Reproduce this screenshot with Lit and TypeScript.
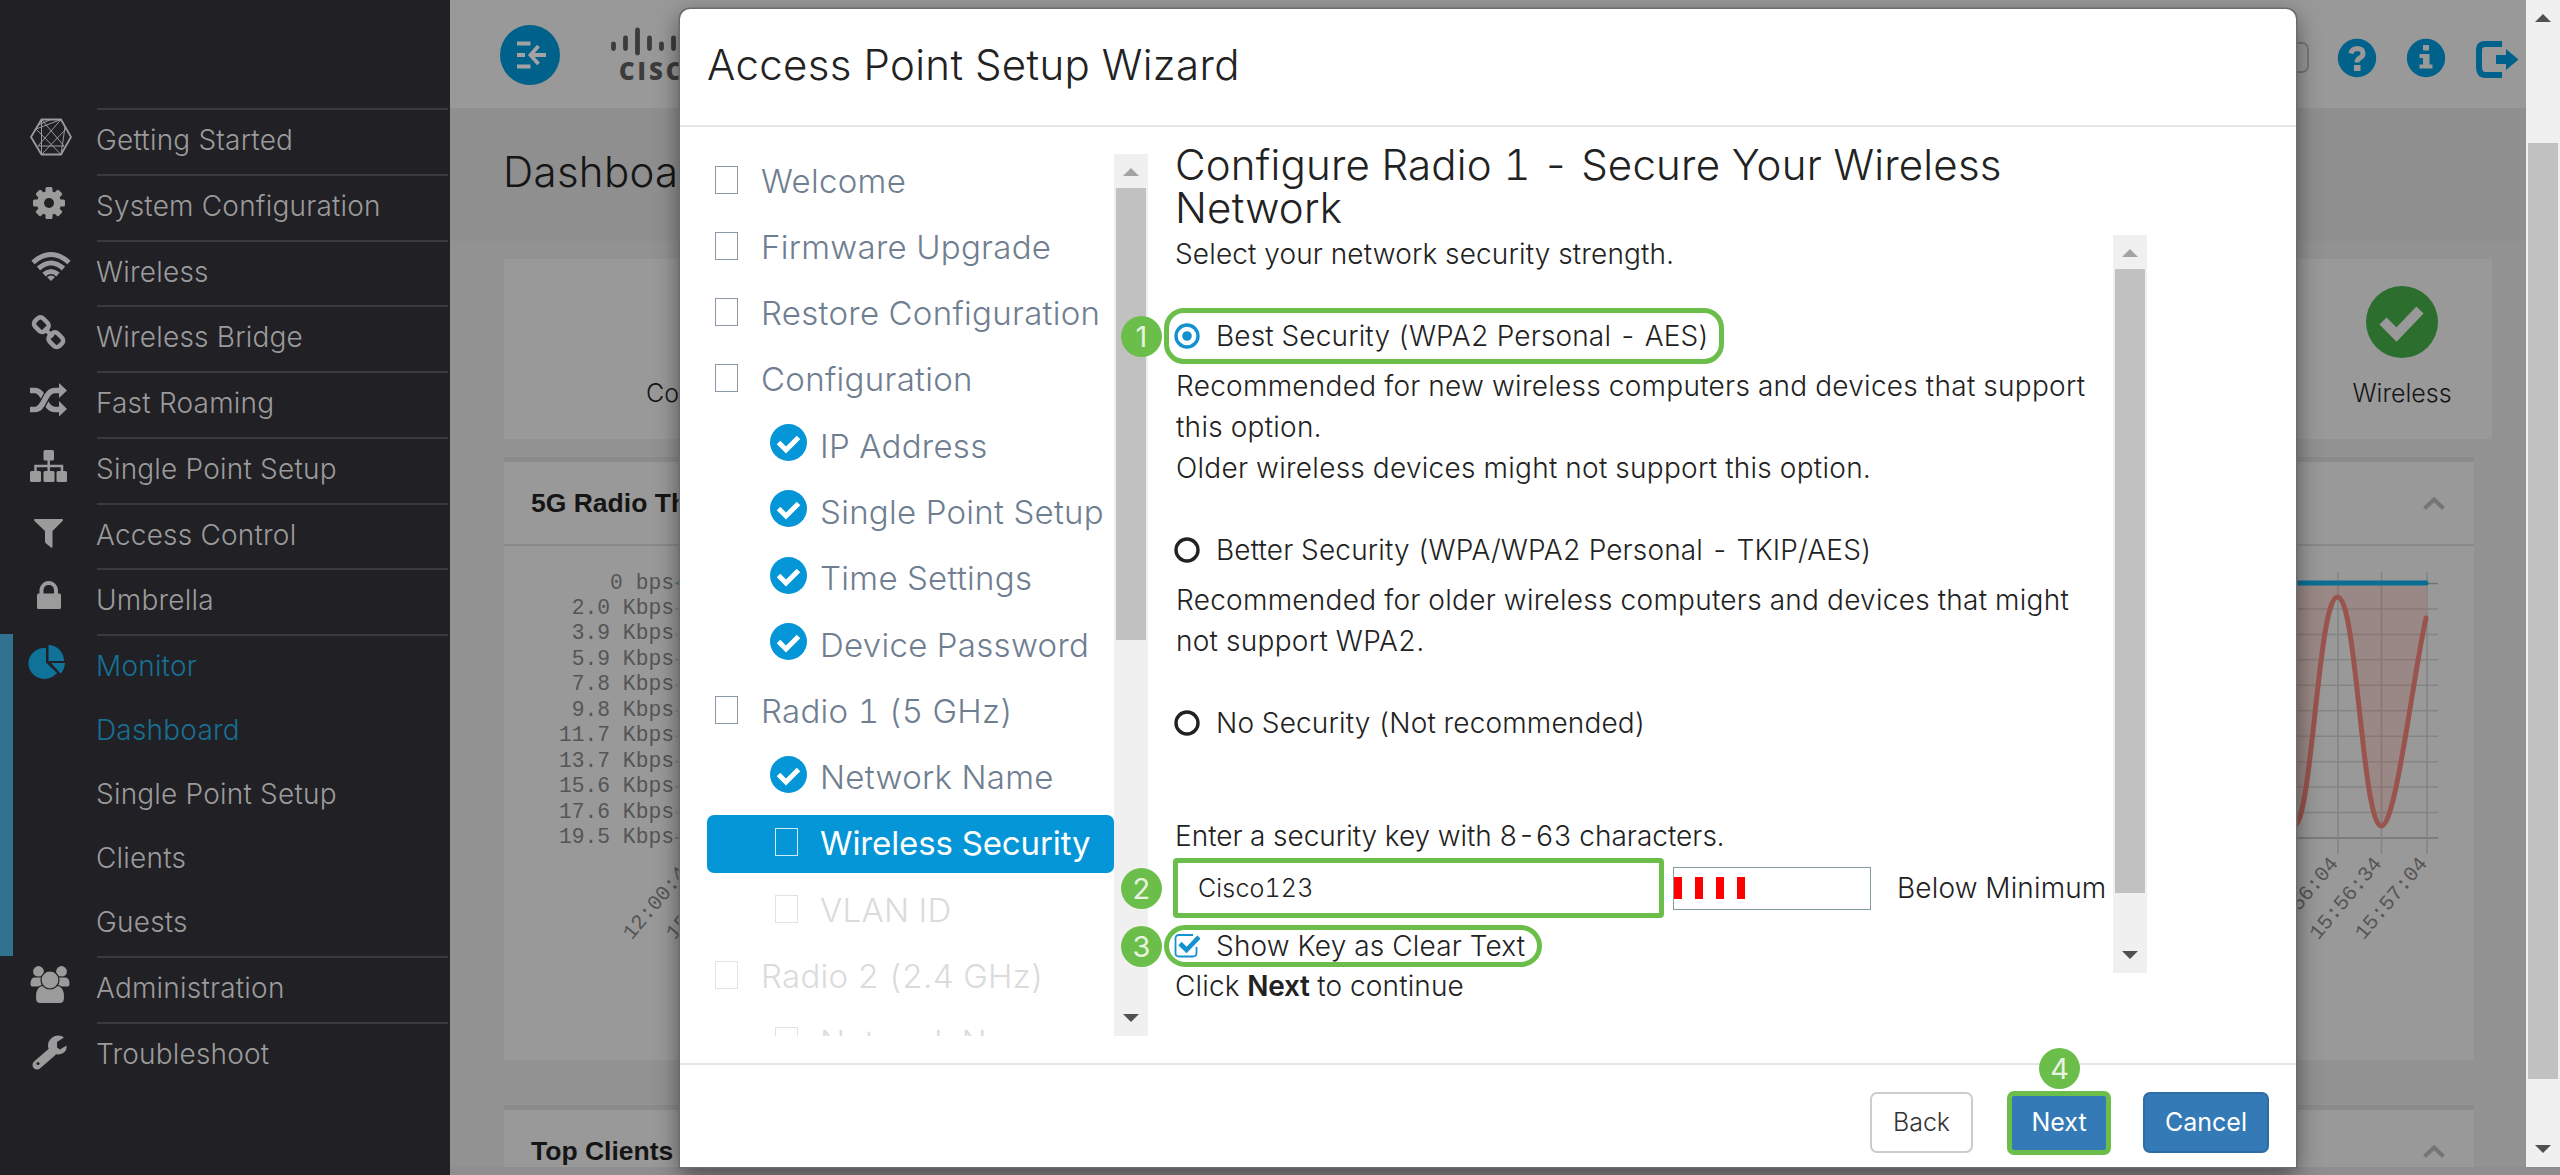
import { LitElement, html, css, svg, nothing } from "lit";
import { customElement, property } from "lit/decorators.js";
import { classMap } from "lit/directives/class-map.js";

const ICONS: Record<string, unknown> = {
  start: svg`
    <g fill="none" stroke="currentColor">
      <path stroke-width="1.8" d="M13.5 4.5H33L43 22 33 39.5H13.5L3 22Z"/>
      <path stroke-width="1" d="M13.5 4.5 36 31M33 4.5 10 31M13.5 4.5V39.5M33 39.5 8 14M13.5 39.5 38 14M10 31H36M8 14 33 4.5M10 10 23 4.5M33 39.5 37 12"/>
    </g>`,
  gear: svg`
    <g fill="currentColor">
      ${[0, 45, 90, 135].map((a) => svg`<rect x="17.5" y="6" width="7" height="32" rx="1.5" transform="rotate(${a} 21 22)"/>`)}
    </g>
    <circle cx="21" cy="22" r="8.5" fill="none" stroke="currentColor" stroke-width="7"/>
    <circle cx="21" cy="22" r="5" fill="#202025"/>`,
  wifi: svg`
    <g fill="none" stroke="currentColor" stroke-width="5">
      <path d="M5 15.5Q23 -0.5 41 15.5"/>
      <path d="M10.5 21.5Q23 10.5 35.5 21.5"/>
      <path d="M16 27.5Q23 21.5 30 27.5"/>
    </g>
    <path d="M19 30Q23 27 27 30L23 34Z" fill="currentColor"/>`,
  link: svg`
    <g fill="none" stroke="currentColor" stroke-width="4.5">
      <rect x="6.5" y="7" width="14" height="11.5" rx="4" transform="rotate(45 13.5 12.5)"/>
      <rect x="21" y="22" width="14" height="11.5" rx="4" transform="rotate(45 28 27.5)"/>
      <path d="M16 16 25 25" stroke-width="4"/>
    </g>`,
  random: svg`
    <g fill="none" stroke="currentColor" stroke-width="5.5">
      <path d="M2 12.5H7C17 12.5 16 31.5 27 31.5H32"/>
      <path d="M7 31.5C17 31.5 16 12.5 27 12.5" stroke="#202025" stroke-width="8"/>
      <path d="M2 31.5H7C17 31.5 16 12.5 27 12.5H32"/>
    </g>
    <path d="M31 5 39 12.5 31 20ZM31 23 39 31 31 38.5Z" fill="currentColor"/>`,
  sitemap: svg`
    <g fill="currentColor">
      <rect x="15.5" y="6" width="10.5" height="10.5" rx="1.5"/>
      <rect x="2" y="27" width="11" height="11" rx="1.5"/>
      <rect x="15.5" y="27" width="11" height="11" rx="1.5"/>
      <rect x="28.5" y="27" width="10.5" height="11" rx="1.5"/>
    </g>
    <path d="M7.5 28V22H34V28M20.7 15V28" fill="none" stroke="currentColor" stroke-width="2.5"/>`,
  filter: svg`<path d="M6.5 9H34.5Q35.5 10 34.5 11L24.5 21V37Q24 38 23 37.5L17.5 33 17 32V21L6.5 11Q5.5 10 6.5 9Z" fill="currentColor"/>`,
  lock: svg`
    <path d="M13.5 20V14.5A7.3 7.3 0 0 1 28 14.5V20" fill="none" stroke="currentColor" stroke-width="4"/>
    <rect x="9" y="18.5" width="24" height="15.5" rx="1.5" fill="currentColor"/>`,
  pie: svg`
    <g fill="currentColor">
      <path d="M18 7V21.5L29 32A16 15.5 0 1 1 18 7Z"/>
      <path d="M20.5 4A15.5 16 0 0 1 36 20H20.5Z"/>
      <path d="M23 22H37Q36.5 29 32.5 32.5Z"/>
    </g>`,
  users: svg`
    <g fill="currentColor" stroke="#202025" stroke-width="1.2">
      <circle cx="10.5" cy="8.5" r="6"/>
      <circle cx="33.5" cy="8.5" r="6"/>
      <path d="M2 22V19Q3 13 8 14H16V24H4Q2 24 2 22Z"/>
      <path d="M42 22V19Q41 13 36 14H28V24H40Q42 24 42 22Z"/>
      <path d="M7.5 36V31Q9 22.5 15 22.5H29Q35 22.5 36.5 31V36Q36 40.5 32 40.5H12Q8 40.5 7.5 36Z"/>
      <circle cx="22" cy="17" r="9"/>
    </g>`,
  wrench: svg`
    <path d="M24 23 9 36" stroke="currentColor" stroke-width="9" stroke-linecap="round"/>
    <path d="M36 8.5 29 13V18.5L32 20.5 38.5 16.5C39.5 22 35 25.5 30 25.5 24 25.5 20 21 20 16.5 20 11 25 6.5 30 6.5Q34 6.5 36 8.5Z" fill="currentColor"/>
    <circle cx="10" cy="34.5" r="1.5" fill="#202025"/>`,
};

const MENU = [
  { icon: "start", label: "Getting Started" },
  { icon: "gear", label: "System Configuration" },
  { icon: "wifi", label: "Wireless" },
  { icon: "link", label: "Wireless Bridge" },
  { icon: "random", label: "Fast Roaming" },
  { icon: "sitemap", label: "Single Point Setup" },
  { icon: "filter", label: "Access Control" },
  { icon: "lock", label: "Umbrella" },
  {
    icon: "pie",
    label: "Monitor",
    children: ["Dashboard", "Single Point Setup", "Clients", "Guests"],
  },
  { icon: "users", label: "Administration" },
  { icon: "wrench", label: "Troubleshoot" },
];

interface Step {
  label: string;
  sub?: boolean;
  done?: boolean;
  active?: boolean;
  off?: boolean;
}

const STEPS: Step[] = [
  { label: "Welcome" },
  { label: "Firmware Upgrade" },
  { label: "Restore Configuration" },
  { label: "Configuration" },
  { label: "IP Address", sub: true, done: true },
  { label: "Single Point Setup", sub: true, done: true },
  { label: "Time Settings", sub: true, done: true },
  { label: "Device Password", sub: true, done: true },
  { label: "Radio 1 (5 GHz)" },
  { label: "Network Name", sub: true, done: true },
  { label: "Wireless Security", sub: true, active: true },
  { label: "VLAN ID", sub: true, off: true },
  { label: "Radio 2 (2.4 GHz)", off: true },
  { label: "Network Name", sub: true, off: true },
];

const RATES = ["0 bps", "2.0 Kbps", "3.9 Kbps", "5.9 Kbps", "7.8 Kbps", "9.8 Kbps", "11.7 Kbps", "13.7 Kbps", "15.6 Kbps", "17.6 Kbps", "19.5 Kbps"];

const TIMES: [number, string][] = [
  [696, "12:00:44"],
  [739, "15:48:04"],
  [2339, "15:56:04"],
  [2382.5, "15:56:34"],
  [2428, "15:57:04"],
];

@customElement("side-menu")
export class SideMenu extends LitElement {
  static styles = css`
    :host {
      display: block;
      box-sizing: border-box;
      width: 450px;
      height: 1175px;
      padding-top: 108px;
      background: #202025;
      color: #9b9b9b;
      font: 350 28px Inter, sans-serif;
      letter-spacing: 0.2px;
    }
    .group {
      box-sizing: border-box;
      display: grid;
      grid-template-columns: 97px 351px;
      height: 65.75px;
    }
    .group.open {
      height: 322px;
      box-shadow: inset 13px 0 #30728f;
    }
    .open svg {
      color: #0f7299;
    }
    .open .row:nth-child(-n + 2) {
      color: #176f92;
    }
    svg {
      width: 44px;
      height: 44px;
      margin: 7px 0 0 28px;
    }
    .labels {
      border-top: 2px solid #3a3a3e;
    }
    .row {
      height: 64px;
      margin-left: -1px;
      line-height: 61px;
      white-space: nowrap;
    }`;

  render() {
    return MENU.map((item) => html`
      <div class=${classMap({ group: true, open: !!item.children })}>
        <svg viewBox="0 0 44 44">${ICONS[item.icon]}</svg>
        <div class="labels">
          <div class="row">${item.label}</div>
          ${item.children?.map((child) => html`<div class="row">${child}</div>`)}
        </div>
      </div>`);
  }
}

@customElement("scroll-bar")
export class ScrollBar extends LitElement {
  @property({ type: Number }) start = 34;
  @property({ type: Number }) size = 400;
  @property({ type: Boolean }) atTop = false;

  static styles = css`
    :host {
      display: flex;
      flex-direction: column;
      justify-content: space-between;
      align-items: center;
      width: 34px;
      background: #f0f0f0;
      position: relative;
    }
    .thumb {
      position: absolute;
      left: 2px;
      right: 2px;
      background: #c1c1c1;
    }
    svg {
      width: 16px;
      height: 8px;
      margin: 14px 0;
    }`;

  render() {
    return html`
      <svg viewBox="0 0 16 8"><path d="M0 8 8 0 16 8Z" fill=${this.atTop ? "#a3a3a3" : "#505050"}></path></svg>
      <div class="thumb" style="top:${this.start}px;height:${this.size}px"></div>
      <svg viewBox="0 0 16 8"><path d="M0 0 8 8 16 0Z" fill="#505050"></path></svg>`;
  }
}

@customElement("dash-board")
export class DashBoard extends LitElement {
  static styles = css`
    :host {
      display: block;
      width: 2076px;
      height: 1167px;
      overflow: hidden;
      background: #929292;
      color: #151515;
      font: 25px Inter, sans-serif;
    }
    header {
      display: flex;
      height: 108px;
      background: #999;
      justify-content: space-between;
    }
    .brand, .tools {
      display: flex;
    }
    .toggle {
      width: 60px;
      height: 60px;
      margin: 25px 0 0 50px;
    }
    .logo {
      width: 120px;
      height: 80px;
      margin: 20px 0 0 46px;
    }
    .logo text {
      font: 800 24px "Open Sans", sans-serif;
      fill: #3c3c3c;
      letter-spacing: 3px;
    }
    .select {
      box-sizing: border-box;
      width: 80px;
      height: 31px;
      margin: 42px 28px 0 0;
      border: 2px solid #777;
      border-radius: 7px;
    }
    .tools svg {
      width: 40px;
      height: 40px;
      margin: 38px 29px 0 0;
    }
    .tools svg.out {
      width: 44px;
      margin-right: 7px;
    }
    .title {
      box-sizing: border-box;
      height: 133px;
      padding: 38px 53px;
      background: #8f8f8f;
      font-size: 42px;
      font-weight: 300;
      line-height: 52px;
      letter-spacing: 0.3px;
    }
    .status {
      box-sizing: border-box;
      display: flex;
      justify-content: space-between;
      width: 1988px;
      height: 180px;
      margin: 18px 0 0 54px;
      padding: 26px 40px 0 142px;
      background: #999;
    }
    .tile {
      display: flex;
      flex-direction: column;
      align-items: center;
      gap: 7px;
      min-width: 100px;
      line-height: 54px;
      font-weight: 300;
    }
    .tile svg {
      width: 74px;
      height: 74px;
    }
    .panel {
      width: 1970px;
      height: 598px;
      margin: 18px 0 45px 54px;
      border-top: 5px solid #898b8d;
      background: #999;
    }
    .head {
      box-sizing: border-box;
      display: flex;
      justify-content: space-between;
      align-items: center;
      height: 84px;
      padding: 0 29px 0 27px;
      border-bottom: 2px solid #898989;
      font: 700 26.5px "Liberation Sans", sans-serif;
    }
    .head svg {
      width: 22px;
      height: 14px;
    }
    .plot {
      display: block;
      width: 1970px;
      height: 512px;
    }
    .plot text {
      font: 21.3px "Liberation Mono", monospace;
      fill: #555;
      text-anchor: end;
    }
    .plot .time {
      font-size: 20.8px;
    }`;

  private _head(label: string) {
    return html`
      <div class="head">
        <span>${label}</span>
        <svg viewBox="0 0 22 14"><path d="M1.5 12.5 11 3.5 20.5 12.5" fill="none" stroke="#757575" stroke-width="4"></path></svg>
      </div>`;
  }

  private _tile(label: string) {
    return html`
      <div class="tile">
        <svg viewBox="0 0 74 74">
          <circle cx="37" cy="37" r="36" fill="#2b6e2d"></circle>
          <path d="M18 36 31.5 49.5 55 25" fill="none" stroke="#999" stroke-width="10"></path>
        </svg>
        <div>${label}</div>
      </div>`;
  }

  private _plot() {
    return html`
      <svg class="plot" viewBox="504 546 1970 512">
        ${RATES.map((rate, i) => {
          const y = 583.5 + i * 25.45;
          return svg`
            <text x="674" y=${y + 5}>${rate}</text>
            <path d="M675 ${y}H2438" stroke=${i % 10 ? "#858585" : "#737373"} stroke-width="1.5"/>`;
        })}
        ${[2338, 2381.5, 2427].map((x) => svg`<path d="M${x} 572V854" stroke="#838383" stroke-width="1.5"/>`)}
        <path fill="#9c4f45" fill-opacity=".22" d="M2294 826C2312 826 2318 597 2337.5 597S2362 826 2381.5 826C2396 826 2413 675 2426 618V583H2294Z"></path>
        <path fill="none" stroke="#99544d" stroke-width="5" stroke-linecap="round" d="M2294 826C2312 826 2318 597 2337.5 597S2362 826 2381.5 826C2396 826 2413 675 2426 618"></path>
        <path stroke="#0b6f95" stroke-width="5" stroke-linecap="round" d="M680 583H2426"></path>
        ${TIMES.map(([x, time]) => svg`<text class="time" transform="translate(${x} 864) rotate(-50)">${time}</text>`)}
      </svg>`;
  }

  render() {
    return html`
      <header>
        <div class="brand">
          <svg class="toggle" viewBox="0 0 60 60">
            <circle cx="30" cy="30" r="30" fill="#00618b"></circle>
            <path d="M17 18.5H30.5M17 30H25M17 41.5H30.5M32 30H46M38.5 21 30.5 30 38.5 39" fill="none" stroke="#a3a3a3" stroke-width="3.8"></path>
          </svg>
          <svg class="logo" viewBox="606 20 120 80">
            <path d="M613.5 44V48.5M625.5 38V48.5M637.5 30V53M649.5 38V48.5M661.5 44V48.5M673.5 38V48.5M685.5 30V53" stroke="#3c3c3c" stroke-width="4.8" stroke-linecap="round"></path>
            <text x="619" y="80">CISCO</text>
          </svg>
        </div>
        <div class="tools">
          <div class="select"></div>
          <svg viewBox="0 0 40 40">
            <circle cx="20" cy="20" r="19.2" fill="#00618b"></circle>
            <path d="M14 15.5Q15 10.5 20.5 10.5 26 10.8 26 15.5 26 18.5 22.5 20.2 20 21.5 20 24.5" fill="none" stroke="#999" stroke-width="5"></path>
            <rect x="17" y="27" width="6.5" height="6" fill="#999"></rect>
          </svg>
          <svg viewBox="0 0 40 40">
            <circle cx="20" cy="20" r="19.2" fill="#00618b"></circle>
            <path d="M17 7H23V12.5H17ZM13.5 16H23.5V26.5H26.5V30.5H13.5V26.5H17V20H13.5Z" fill="#999"></path>
          </svg>
          <svg class="out" viewBox="0 0 44 40">
            <path d="M27 6H10Q4 6 4 12V28Q4 37 10 37H27" fill="none" stroke="#00618b" stroke-width="6"></path>
            <path d="M21 17H31V11L43.5 21.5 31 32V26H21Z" fill="#00618b"></path>
          </svg>
        </div>
      </header>
      <div class="title">Dashboard</div>
      <div class="status">${this._tile("Connectivity")}${this._tile("Wireless")}</div>
      <div class="panel">${this._head("5G Radio Throughput")}${this._plot()}</div>
      <div class="panel">${this._head("Top Clients")}</div>`;
  }
}

@customElement("setup-wizard")
export class SetupWizard extends LitElement {
  static styles = css`
    :host {
      display: flex;
      flex-direction: column;
      box-sizing: border-box;
      width: 1616px;
      height: 1158px;
      background: #fff;
      border-radius: 10px 10px 0 0;
      box-shadow: 0 0 0 1.5px #6c6c6c, 0 8px 24px rgba(0, 0, 0, 0.5);
      color: #222;
      font: 300 28px/41px Inter, sans-serif;
      font-variant-numeric: tabular-nums;
      letter-spacing: 0.15px;
      white-space: nowrap;
    }
    header {
      box-sizing: border-box;
      height: 118px;
      padding-left: 27px;
      border-bottom: 2px solid #e5e5e5;
      font-size: 42px;
      line-height: 112px;
      letter-spacing: 0.35px;
    }
    .body {
      box-sizing: border-box;
      display: flex;
      height: 936px;
      padding: 25px 0 0 27px;
    }
    .steps {
      width: 407px;
      height: 884px;
      overflow: hidden;
      letter-spacing: 0.3px;
    }
    .step {
      display: flex;
      align-items: center;
      height: 58px;
      margin-bottom: 8.3px;
      padding-left: 8px;
      border-radius: 7px;
      color: #6f7e90;
      font-size: 33px;
    }
    .step.sub {
      padding-left: 63px;
    }
    .step.active {
      background: #0496d7;
      color: #fff;
      font-weight: 400;
      letter-spacing: -0.1px;
    }
    .step.off {
      color: #dadbdd;
    }
    .glyph {
      flex: none;
      width: 46px;
    }
    .sub .glyph {
      width: 50px;
    }
    .box {
      box-sizing: border-box;
      width: 23px;
      height: 28px;
      margin: 0 0 3px;
      border: 1.5px solid;
      opacity: 0.8;
    }
    .sub .box {
      margin-left: 5px;
    }
    .glyph svg {
      display: block;
      width: 37px;
      height: 37px;
      margin-top: -7px;
    }
    .steps + scroll-bar {
      height: 882px;
      margin-top: 2px;
    }
    .pane {
      flex: 1;
      margin-top: -9.5px;
      padding-left: 27px;
    }
    h2 {
      margin: 0;
      font-size: 42px;
      line-height: 43px;
      font-weight: 300;
      letter-spacing: 0.2px;
    }
    .columns {
      display: flex;
    }
    .content {
      box-sizing: border-box;
      width: 938px;
      padding-top: 5px;
    }
    .columns scroll-bar {
      height: 738px;
      margin-top: 6.5px;
    }
    .choice {
      position: relative;
      box-sizing: border-box;
      display: flex;
      align-items: center;
      gap: 16px;
      width: max-content;
      height: 56px;
      margin: 33.5px 0 1.5px -11px;
      padding: 0 10px 0 5px;
      border: 5px solid transparent;
    }
    .choice svg {
      width: 26px;
      height: 26px;
    }
    .marked {
      border-color: #6cbe4b;
      border-radius: 20px;
    }
    .para {
      padding-left: 1px;
      letter-spacing: 0.27px;
    }
    .ask {
      margin-top: 64.5px;
      letter-spacing: 0;
    }
    .key {
      position: relative;
      display: flex;
      align-items: center;
      height: 60px;
      margin: 1.5px 0 7px -2px;
    }
    .input {
      box-sizing: border-box;
      width: 491px;
      height: 60px;
      padding-left: 20px;
      border: 5px solid #6cbe4b;
      border-radius: 4px;
      font-size: 25px;
      line-height: 50px;
    }
    .meter {
      box-sizing: border-box;
      display: flex;
      align-items: center;
      gap: 13.5px;
      width: 198px;
      height: 43px;
      margin: 0 26px 0 9px;
      border: 1.5px solid #829b9f;
    }
    .meter i {
      width: 7.5px;
      height: 22px;
      background: #f00;
    }
    .show {
      height: 42px;
      margin-top: 0;
      margin-bottom: -1px;
      padding-right: 12px;
      border-radius: 21px;
      letter-spacing: 0.2px;
    }
    b {
      font-weight: 600;
      letter-spacing: -0.3px;
    }
    .badge {
      position: absolute;
      width: 41px;
      height: 41px;
      border-radius: 50%;
      background: #6cbe4b;
      color: #e8f3e2;
      font: 400 29px/41px Inter, sans-serif;
      text-align: center;
    }
    .choice .badge {
      left: -48px;
    }
    .key .badge {
      left: -52px;
    }
    footer {
      box-sizing: border-box;
      display: flex;
      height: 104px;
      justify-content: flex-end;
      align-items: center;
      padding: 13px 27px 0 0;
      border-top: 2px solid #e5e5e5;
    }
    .btn {
      position: relative;
      box-sizing: border-box;
      height: 61px;
      border: 2px solid #2e6da4;
      border-radius: 7px;
      background: #337ab7;
      color: #fff;
      font-size: 25px;
      font-weight: 400;
      line-height: 56px;
      letter-spacing: 0;
      text-align: center;
    }
    .back {
      width: 103px;
      margin-right: 34px;
      background: #fff;
      border-color: #ccc;
      color: #333;
      font-weight: 300;
    }
    .next {
      width: 104px;
      height: 64px;
      margin-right: 32px;
      border: 5px solid #6cbe4b;
      line-height: 52px;
    }
    .cancel {
      width: 126px;
    }
    .btn .badge {
      left: 27px;
      top: -48px;
    }`;

  private _step(step: Step) {
    const classes = { step: true, sub: !!step.sub, active: !!step.active, off: !!step.off };
    return html`
      <div class=${classMap(classes)}>
        <div class="glyph">
          ${step.done
            ? html`<svg viewBox="0 0 37 37">
                <circle cx="18.5" cy="18.5" r="18.5" fill="#0496d7"></circle>
                <path d="M8.5 18.5 16 26 28.5 13.5" fill="none" stroke="#fff" stroke-width="5"></path>
              </svg>`
            : html`<div class="box"></div>`}
        </div>
        ${step.label}
      </div>`;
  }

  private _choice(label: string, badge?: string) {
    return html`
      <div class=${classMap({ choice: true, marked: !!badge })}>
        ${badge ? html`<span class="badge">${badge}</span>` : nothing}
        <svg viewBox="0 0 26 26">
          <circle cx="13" cy="13" r="11" fill="none" stroke=${badge ? "#1492d0" : "#222"} stroke-width="3.4"></circle>
          ${badge ? svg`<circle cx="13" cy="13" r="4.8" fill="#1492d0"/>` : nothing}
        </svg>
        <span>${label}</span>
      </div>`;
  }

  render() {
    return html`
      <header>Access Point Setup Wizard</header>
      <div class="body">
        <div class="steps">${STEPS.map((step) => this._step(step))}</div>
        <scroll-bar atTop start="34" size="452"></scroll-bar>
        <div class="pane">
          <h2>Configure Radio 1 - Secure Your Wireless<br />Network</h2>
          <div class="columns">
            <div class="content">
              <div>Select your network security strength.</div>
              ${this._choice("Best Security (WPA2 Personal - AES)", "1")}
              <div class="para">
                Recommended for new wireless computers and devices that support<br />this option.<br />Older wireless devices might not support this option.
              </div>
              ${this._choice("Better Security (WPA/WPA2 Personal - TKIP/AES)")}
              <div class="para">Recommended for older wireless computers and devices that might<br />not support WPA2.</div>
              ${this._choice("No Security (Not recommended)")}
              <div class="ask">Enter a security key with 8-63 characters.</div>
              <div class="key">
                <span class="badge">2</span>
                <div class="input">Cisco123</div>
                <div class="meter"><i></i><i></i><i></i><i></i></div>
                <span>Below Minimum</span>
              </div>
              <div class="choice marked show">
                <span class="badge">3</span>
                <svg viewBox="0 0 26 26">
                  <path d="M19 2H5Q1.5 2 1.5 5.5V20Q1.5 23.5 5 23.5H19Q22.5 23.5 22.5 20V14" fill="none" stroke="#1492d0" stroke-width="1.8"></path>
                  <path d="M6 10.5 12.5 17 25 4" fill="none" stroke="#1492d0" stroke-width="4.6"></path>
                </svg>
                <span>Show Key as Clear Text</span>
              </div>
              <div>Click <b>Next</b> to continue</div>
            </div>
            <scroll-bar atTop start="34" size="624"></scroll-bar>
          </div>
        </div>
      </div>
      <footer>
        <div class="btn back">Back</div>
        <div class="btn next"><span class="badge">4</span>Next</div>
        <div class="btn cancel">Cancel</div>
      </footer>`;
  }
}

@customElement("app-root")
export class AppRoot extends LitElement {
  static styles = css`
    :host {
      display: flex;
      position: relative;
      width: 2560px;
      height: 1175px;
      overflow: hidden;
      background: #8e8e8e;
    }
    .page-scroll {
      height: 1167px;
    }
    setup-wizard {
      position: absolute;
      left: 680px;
      top: 9px;
    }`;

  render() {
    return html`
      <side-menu></side-menu>
      <dash-board></dash-board>
      <scroll-bar class="page-scroll" start="143" size="936"></scroll-bar>
      <setup-wizard></setup-wizard>`;
  }
}
